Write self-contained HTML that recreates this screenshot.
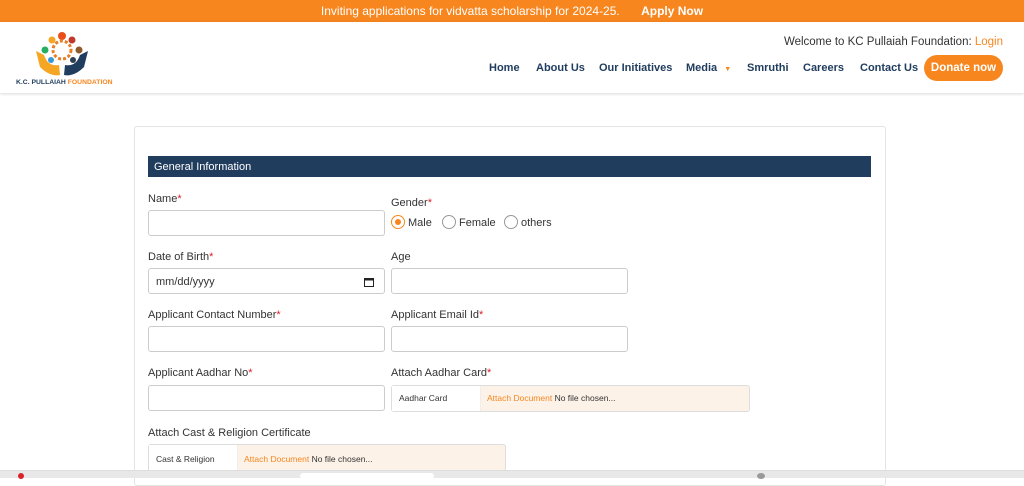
<!DOCTYPE html>
<html><head><meta charset="utf-8"><style>
*{box-sizing:border-box;margin:0;padding:0}
body{width:1024px;height:478px;overflow:hidden;font-family:"Liberation Sans",sans-serif;background:#fff;position:relative;color:#333}
.top{position:absolute;left:0;top:0;width:1024px;height:22px;background:#f7861f;color:#fff;font-size:12px;line-height:23px;text-align:center}
.top b{margin-left:18px}
.hdr{position:absolute;top:22px;left:0;width:1024px;height:71px;background:#fff;box-shadow:0 1px 3px rgba(0,0,0,.15)}
.welcome{position:absolute;right:21px;top:14px;font-size:11.5px;color:#333}
.welcome span{color:#f7861f}
.nav{position:absolute;top:40px;font-size:11px;font-weight:bold;color:#213d5e}
.don{position:absolute;left:924px;top:33px;width:79px;height:26px;border-radius:13px;background:#f7861f;color:#fff;font-size:11.5px;font-weight:bold;text-align:center;line-height:26px}
.card{position:absolute;left:134px;top:126px;width:752px;height:360px;border:1px solid #e4e4e4;border-radius:3px;background:#fff}
.sec{position:absolute;left:148px;top:156px;width:723px;height:21px;background:#213d5e;color:#fff;font-size:11px;line-height:23px;padding-left:6px}
.lbl{position:absolute;font-size:11px;color:#333;margin-top:2px}
.lbl i{color:#d9232e;font-style:normal}
.inp{position:absolute;height:26px;border:1px solid #ccc;border-radius:3px;background:#fff}
.file{position:absolute;height:27px;border:1px solid #ddd;border-radius:3px;background:#fdf2e8;font-size:8.5px;line-height:25px}
.file .l{position:absolute;left:0;top:0;bottom:0;width:89px;background:#fff;padding-left:7px;color:#333;border-right:1px solid #eee}
.file .r{position:absolute;left:95px;color:#333}
.file .r span{color:#f7861f}
.rad{position:absolute;top:215px;width:14px;height:14px;border:1px solid #999;border-radius:50%}
.bot{position:absolute;left:0;top:470px;width:1024px;height:8px;background:#e8e8e8;border-top:1px solid #ddd}
</style></head><body>
<div class="top">Inviting applications for vidvatta scholarship for 2024-25. <b>Apply Now</b></div>
<div class="hdr">
<svg style="position:absolute;left:14px;top:7px" width="100" height="58" viewBox="0 0 100 58">
<circle cx="48" cy="7" r="4" fill="#e94e1b"/><circle cx="38" cy="11" r="3.5" fill="#f5a623"/><circle cx="58" cy="11" r="3.5" fill="#c0392b"/>
<circle cx="31" cy="21" r="3.5" fill="#27ae60"/><circle cx="65" cy="21" r="3.5" fill="#8e5a2b"/><circle cx="37" cy="31" r="3" fill="#3498db"/><circle cx="59" cy="31" r="3" fill="#2c3e50"/>
<circle cx="48" cy="21" r="9" fill="none" stroke="#e67e22" stroke-width="3" stroke-dasharray="3 2"/>
<path d="M22 22 L26 38 Q36 48 46 46 L45 36 Q34 38 30 26 Z" fill="#f5a623"/>
<path d="M74 22 L70 38 Q60 48 50 46 L51 36 Q62 38 66 26 Z" fill="#213d5e"/>
<text x="2" y="55" font-size="6.8" font-weight="bold" fill="#213d5e" font-family="Liberation Sans">K.C. PULLAIAH <tspan fill="#f7861f">FOUNDATION</tspan></text>
</svg>
<div class="welcome">Welcome to KC Pullaiah Foundation: <span>Login</span></div>
<div class="nav" style="left:489px">Home</div>
<div class="nav" style="left:536px">About Us</div>
<div class="nav" style="left:599px">Our Initiatives</div>
<div class="nav" style="left:686px">Media <span style="color:#f7861f;font-size:7px;margin-left:4px">▼</span></div>
<div class="nav" style="left:747px">Smruthi</div>
<div class="nav" style="left:803px">Careers</div>
<div class="nav" style="left:860px">Contact Us</div>
<div class="don">Donate now</div>
</div>
<div class="card"></div>
<div class="sec">General Information</div>
<div class="lbl" style="left:148px;top:191px">Name<i>*</i></div>
<div class="inp" style="left:148px;top:210px;width:237px"></div>
<div class="lbl" style="left:391px;top:195px">Gender<i>*</i></div>
<div class="rad" style="left:391px;border-color:#f7861f"><div style="position:absolute;left:3px;top:3px;width:6px;height:6px;border-radius:50%;background:#f7861f"></div></div>
<div class="lbl" style="left:408px;top:215px">Male</div>
<div class="rad" style="left:442px"></div><div class="lbl" style="left:459px;top:215px">Female</div>
<div class="rad" style="left:504px"></div><div class="lbl" style="left:521px;top:215px">others</div>
<div class="lbl" style="left:148px;top:249px">Date of Birth<i>*</i></div>
<div class="inp" style="left:148px;top:268px;width:237px;font-size:11px;line-height:26px;padding-left:7px">mm/dd/yyyy<svg style="position:absolute;right:10px;top:8px" width="10" height="10" viewBox="0 0 10 10"><rect x="0.5" y="1.5" width="9" height="8" fill="none" stroke="#222"/><rect x="0.5" y="1.5" width="9" height="2" fill="#222"/></svg></div>
<div class="lbl" style="left:391px;top:249px">Age</div>
<div class="inp" style="left:391px;top:268px;width:237px"></div>
<div class="lbl" style="left:148px;top:307px">Applicant Contact Number<i>*</i></div>
<div class="inp" style="left:148px;top:326px;width:237px"></div>
<div class="lbl" style="left:391px;top:307px">Applicant Email Id<i>*</i></div>
<div class="inp" style="left:391px;top:326px;width:237px"></div>
<div class="lbl" style="left:148px;top:365px">Applicant Aadhar No<i>*</i></div>
<div class="inp" style="left:148px;top:385px;width:237px"></div>
<div class="lbl" style="left:391px;top:365px">Attach Aadhar Card<i>*</i></div>
<div class="file" style="left:391px;top:385px;width:359px"><div class="l">Aadhar Card</div><div class="r"><span>Attach Document</span> No file chosen...</div></div>
<div class="lbl" style="left:148px;top:425px">Attach Cast &amp; Religion Certificate</div>
<div class="file" style="left:148px;top:444px;width:358px;height:32px"><div class="l" style="line-height:28px">Cast &amp; Religion</div><div class="r" style="line-height:28px"><span>Attach Document</span> No file chosen...</div></div>
<div class="bot"><div style="position:absolute;left:18px;top:2px;width:6px;height:6px;border-radius:50%;background:#d9232e"></div><div style="position:absolute;left:300px;top:2px;width:134px;height:6px;background:#fff;border-radius:3px"></div><div style="position:absolute;left:757px;top:2px;width:8px;height:6px;border-radius:50%;background:#999"></div></div>
</body></html>
